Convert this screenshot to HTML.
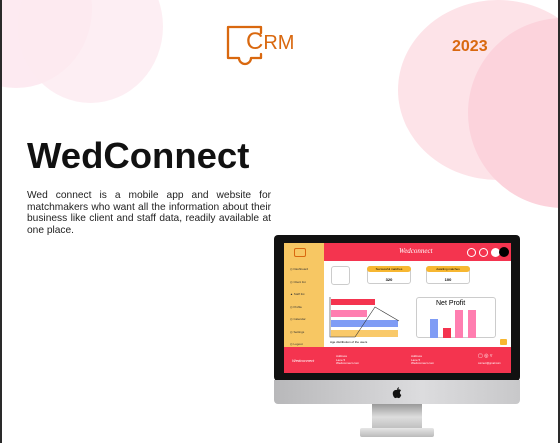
<!DOCTYPE html>
<html><head><style>
*{margin:0;padding:0;box-sizing:border-box}
body{width:560px;height:443px;overflow:hidden;background:#fff;font-family:"Liberation Sans",sans-serif;position:relative}
.c{position:absolute;border-radius:50%}
.a{position:absolute}
</style></head><body>
<div class="c" style="left:-60px;top:-70px;width:152px;height:158px;background:#fde8ef;opacity:.9"></div>
<div class="c" style="left:18px;top:-50px;width:145px;height:153px;background:#fdeaf0;opacity:.8"></div>
<div class="c" style="left:398px;top:0;width:200px;height:180px;background:#fde3e8"></div>
<div class="c" style="left:468px;top:18px;width:190px;height:190px;background:#fcd3dc"></div>
<div class="a" style="left:0;top:0;width:2px;height:443px;background:#2a2a2a"></div>
<div class="a" style="right:0;top:0;width:2px;height:443px;background:#2a2a2a"></div>
<svg class="a" style="left:225px;top:25px" width="40" height="46" viewBox="0 0 40 46">
<path d="M36 8 V2 H3 V33 H14 A6 6 0 1 0 26 33 H36 V29" fill="none" stroke="#d9680f" stroke-width="2.3" stroke-linejoin="round" stroke-linecap="round"/></svg>
<div class="a" style="left:246px;top:31px;font-size:20px;color:#d9680f;line-height:22px">
<span style="font-size:24px">C</span>RM</div>
<div class="a" style="left:452px;top:38px;font-size:16px;font-weight:bold;color:#d9680f">2023</div>
<div class="a" style="left:27px;top:135px;font-size:36.5px;font-weight:bold;color:#111">WedConnect</div>
<div class="a" style="left:27px;top:190px;width:244px;font-size:10.2px;line-height:11.5px;color:#222;text-align:justify">Wed connect is a mobile app and website for matchmakers who want all the information about their business like client and staff data, readily available at one place.</div>

<div class="a" style="left:274px;top:235px;width:246px;height:146px;background:#111;border-radius:4px"></div>
<div class="a" style="left:274px;top:380px;width:246px;height:24px;background:linear-gradient(90deg,#b8b8ba,#dcdcde 60%,#c8c8ca);border-radius:0 0 4px 4px"></div>
<svg class="a" style="left:392px;top:387px" width="10" height="12" viewBox="0 0 10 12"><path d="M5 3C6 2 8 2 9 3.5 7.5 4.5 7.5 7 9.3 8 8.5 10 7.5 11.5 6.3 11 5.5 10.7 4.5 10.7 3.7 11 2.5 11.5 1 9 .8 7 .5 4 3 2.5 5 3ZM5 2.5C5 1.3 6 .3 7 .2 7 1.4 6 2.5 5 2.5Z" fill="#111"/></svg>
<div class="a" style="left:372px;top:404px;width:50px;height:26px;background:linear-gradient(180deg,#999,#ddd 50%,#bbb)"></div>
<div class="a" style="left:360px;top:428px;width:74px;height:9px;background:linear-gradient(180deg,#e6e6e6,#bbb);border-radius:2px"></div>

<div class="a" style="left:284px;top:243px;width:40px;height:104px;background:#f7c763"></div>
<div class="a" style="left:324px;top:243px;width:187px;height:18px;background:#f4344f"></div>
<div class="a" style="left:324px;top:261px;width:187px;height:86px;background:#fff"></div>
<div class="a" style="left:284px;top:347px;width:227px;height:26px;background:#f4344f"></div>
<div class="a" style="left:294px;top:248px;width:12px;height:9px;border:1px solid #d9680f;border-radius:2px"></div>
<div class="a" style="left:399px;top:247px;font-size:7px;font-style:italic;color:#fff;font-family:'Liberation Serif',serif">Wedconnect</div>
<div class="a" style="left:467px;top:248px;width:9px;height:9px;border:1px solid #fff;border-radius:50%"></div>
<div class="a" style="left:479px;top:248px;width:9px;height:9px;border:1px solid #fff;border-radius:50%"></div>
<div class="a" style="left:491px;top:248px;width:9px;height:9px;background:#fff;border-radius:50%"></div>
<div class="a" style="left:499px;top:247px;width:10px;height:10px;background:#000;border-radius:50%"></div>
<div class="a" style="left:290px;top:263px;font-size:3px;line-height:12.5px;color:#333">◎ Dashboard<br>◎ Client list<br>▲ Staff list<br>◎ Profile<br>◎ Calendar<br>◎ Settings<br>◎ Logout</div>
<div class="a" style="left:331px;top:266px;width:19px;height:19px;border:1px solid #ccc;border-radius:3px"></div>
<div class="a" style="left:367px;top:266px;width:44px;height:18px;border:1px solid #ccc;border-radius:3px;background:#fff"></div>
<div class="a" style="left:367px;top:266px;width:44px;height:6px;background:#f7b731;border-radius:3px;font-size:3px;text-align:center;line-height:6px">Successful matches</div>
<div class="a" style="left:367px;top:277px;width:44px;font-size:4px;font-weight:bold;text-align:center">320</div>
<div class="a" style="left:426px;top:266px;width:44px;height:18px;border:1px solid #ccc;border-radius:3px;background:#fff"></div>
<div class="a" style="left:426px;top:266px;width:44px;height:6px;background:#f7b731;border-radius:3px;font-size:3px;text-align:center;line-height:6px">Awaiting matches</div>
<div class="a" style="left:426px;top:277px;width:44px;font-size:4px;font-weight:bold;text-align:center">100</div>
<div class="a" style="left:331px;top:299px;width:44px;height:6px;background:#f4344f"></div>
<div class="a" style="left:331px;top:310px;width:36px;height:7px;background:#ff7eb0"></div>
<div class="a" style="left:331px;top:320px;width:67px;height:7px;background:#7f9cf5"></div>
<div class="a" style="left:331px;top:330px;width:67px;height:7px;background:#f9c96a"></div>
<svg class="a" style="left:329px;top:297px" width="72" height="42"><path d="M1 0V40H26L46 10 70 24" fill="none" stroke="#333" stroke-width=".6"/></svg>
<div class="a" style="left:330px;top:340px;font-size:3px">Age distribution of the users</div>
<div class="a" style="left:416px;top:297px;width:80px;height:41px;border:1px solid #ccc;border-radius:3px"></div>
<div class="a" style="left:436px;top:300px;font-size:7px">Net Profit</div>
<div class="a" style="left:430px;top:319px;width:8px;height:19px;background:#7f9cf5"></div>
<div class="a" style="left:443px;top:328px;width:8px;height:10px;background:#f4344f"></div>
<div class="a" style="left:455px;top:310px;width:8px;height:28px;background:#ff7eb0"></div>
<div class="a" style="left:468px;top:310px;width:8px;height:28px;background:#ff7eb0"></div>
<div class="a" style="left:500px;top:339px;width:7px;height:6px;background:#f7b731;border-radius:1px"></div>
<div class="a" style="left:292px;top:358px;font-size:4px;font-style:italic;color:#fff">Wedconnect</div>
<div class="a" style="left:336px;top:355px;font-size:3px;line-height:3.5px;color:#fff">Address<br>Lane 5<br>Wedconnect.com</div>
<div class="a" style="left:411px;top:355px;font-size:3px;line-height:3.5px;color:#fff">Address<br>Lane 5<br>Wedconnect.com</div>
<div class="a" style="left:478px;top:353px;font-size:5px;color:#fff">▢ ◎ ▿</div>
<div class="a" style="left:478px;top:362px;font-size:2.5px;color:#fff">connect@gmail.com</div>
</body></html>
